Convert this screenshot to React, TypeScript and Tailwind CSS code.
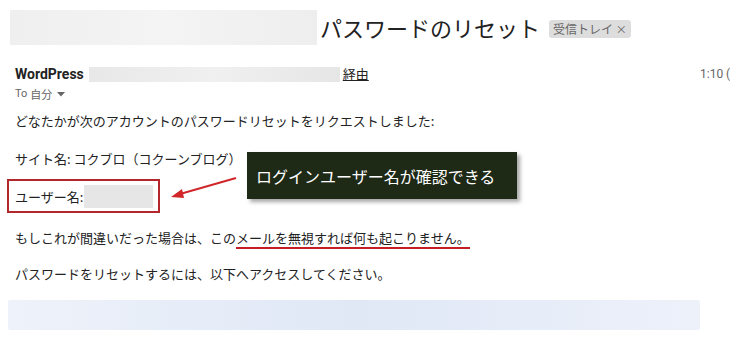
import React from 'react';

const jp = { fontFamily: '"Noto Sans CJK JP", "Noto Sans", sans-serif' };

export default function App() {
  return (
    <div className="relative w-[730px] h-[351px] overflow-hidden bg-white text-[#222]" style={jp}>
      {/* subject line */}
      <div className="flex items-center pt-[10px] pl-[10px]">
        <div className="w-[307px] h-[35px] bg-gradient-to-r from-[#efefef] via-[#f4f4f4] to-[#eeeeee]" />
        <h1 className="ml-[3px] text-[22px] leading-[35px] font-normal text-[#222] whitespace-nowrap">
          パスワードのリセット
        </h1>
        <span className="ml-[9px] mt-[2px] rounded-[3px] bg-[#dddddd] px-[4px] h-[18px] leading-[18px] text-[12px] text-[#666] whitespace-nowrap">
          受信トレイ <span className="text-[11px]">×</span>
        </span>
      </div>

      {/* sender */}
      <div className="flex items-center pl-[15px] mt-[21px] h-[16px]">
        <span className="text-[14px] font-bold text-[#222]" style={{ fontFamily: 'Roboto, "Noto Sans CJK JP", sans-serif' }}>
          WordPress
        </span>
        <div className="ml-[5px] w-[251px] h-[15px] bg-gradient-to-r from-[#e8e8e8] via-[#f0f0f0] to-[#e6e6e6]" />
        <span className="ml-[3px] text-[13px] underline text-[#222]">経由</span>
        <div className="flex-1" />
        <span className="w-[30px] whitespace-nowrap text-[12px] text-[#666]" style={{ fontFamily: 'Roboto, "Noto Sans CJK JP", sans-serif' }}>
          1:10 (2 時間前)
        </span>
      </div>
      <div className="flex items-center pl-[15px] mt-[4px] text-[11px] text-[#666] h-[16px]">
        <span style={{ fontFamily: 'Roboto, sans-serif' }}>To</span>
        <span className="ml-[3px]">自分</span>
        <svg className="ml-[5px]" width="8" height="5" viewBox="0 0 8 5">
          <path d="M0 0 L8 0 L4 4.5 Z" fill="#666" />
        </svg>
      </div>

      {/* body */}
      <div className="pl-[15px] text-[13px] leading-[19px]">
        <p className="mt-[9px]">どなたかが次のアカウントのパスワードリセットをリクエストしました:</p>
        <p className="mt-[19px]">サイト名: コクブロ（コクーンブログ）</p>
        <div className="mt-[11px] -ml-[8px] w-[153px] h-[34px] border-2 border-[#b3262a] flex items-center pl-[6px]">
          <span>ユーザー名:</span>
          <div className="ml-[1px] w-[69px] h-[23px] bg-[#e6e6e6]" />
        </div>
        <p className="mt-[15px]">
          もしこれが間違いだった場合は、この
          <span className="border-b-2 border-[#c41e24]">メールを無視すれば何も起こりません。</span>
        </p>
        <p className="mt-[17px]">パスワードをリセットするには、以下へアクセスしてください。</p>
      </div>

      <div className="mt-[17px] ml-[8px] w-[692px] h-[30px] rounded-[2px] bg-gradient-to-r from-[#eef2fa] via-[#e0e8f6] to-[#edf1fa]" />

      {/* callout */}
      <div className="absolute left-[247px] top-[152px] w-[270px] h-[47px] bg-[#1e2916] shadow-[3px_3px_4px_rgba(0,0,0,0.35)] flex items-center pl-[9px]">
        <span className="text-[16px] text-white whitespace-nowrap">ログインユーザー名が確認できる</span>
      </div>
      <svg className="absolute left-0 top-0 pointer-events-none" width="730" height="351">
        <line x1="236" y1="178" x2="180" y2="194" stroke="#d0262a" strokeWidth="2" />
        <path d="M171 197 L182 189 L184 198 Z" fill="#d0262a" />
      </svg>
    </div>
  );
}
